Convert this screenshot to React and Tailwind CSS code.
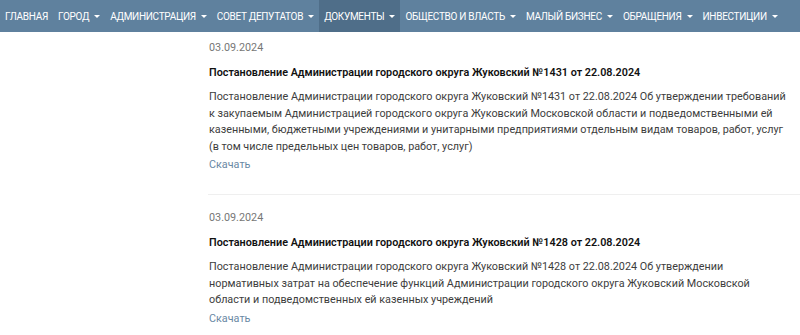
import React from "react";

const navItems = [
  { label: "ГЛАВНАЯ", caret: false },
  { label: "ГОРОД", caret: true },
  { label: "АДМИНИСТРАЦИЯ", caret: true },
  { label: "СОВЕТ ДЕПУТАТОВ", caret: true },
  { label: "ДОКУМЕНТЫ", caret: true, active: true },
  { label: "ОБЩЕСТВО И ВЛАСТЬ", caret: true },
  { label: "МАЛЫЙ БИЗНЕС", caret: true },
  { label: "ОБРАЩЕНИЯ", caret: true },
  { label: "ИНВЕСТИЦИИ", caret: true },
];

const docs = [
  {
    date: "03.09.2024",
    title: "Постановление Администрации городского округа Жуковский №1431 от 22.08.2024",
    text: "Постановление Администрации городского округа Жуковский №1431 от 22.08.2024 Об утверждении требований к закупаемым Администрацией городского округа Жуковский Московской области и подведомственными ей казенными, бюджетными учреждениями и унитарными предприятиями отдельным видам товаров, работ, услуг (в том числе предельных цен товаров, работ, услуг)",
  },
  {
    date: "03.09.2024",
    title: "Постановление Администрации городского округа Жуковский №1428 от 22.08.2024",
    text: "Постановление Администрации городского округа Жуковский №1428 от 22.08.2024 Об утверждении нормативных затрат на обеспечение функций Администрации городского округа Жуковский Московской области и подведомственных ей казенных учреждений",
  },
];

function Caret() {
  return (
    <span className="ml-[5px] inline-block h-0 w-0 border-x-[3px] border-t-[3px] border-x-transparent border-t-white align-middle" />
  );
}

export default function App() {
  return (
    <div
      className="h-[335px] w-[800px] overflow-hidden bg-white"
      style={{ fontFamily: 'Roboto, "Open Sans", sans-serif' }}
    >
      <nav className="flex h-[32px] items-stretch bg-[#5f819e] text-[10px] tracking-[-0.3px] text-white">
        {navItems.map((it) => (
          <div
            key={it.label}
            className={
              "flex items-center whitespace-nowrap px-[5px] " +
              (it.active ? "bg-[#4f6e89]" : "")
            }
          >
            {it.label}
            {it.caret && <Caret />}
          </div>
        ))}
      </nav>
      <main className="pl-[209px]">
        {docs.map((d, i) => (
          <div key={i}>
            {i > 0 && <div className="h-px w-[600px] bg-[#efefef] -ml-px" />}
            <div className={"w-[584px] " + (i === 0 ? "pt-[8px] pb-[21px]" : "pt-[15px]")}>
              <div className="text-[10.8px] leading-[16px] text-[#777]">{d.date}</div>
              <div className="mt-[9px] text-[10.8px] font-semibold leading-[16px] text-[#111]">{d.title}</div>
              <div className="mt-[8px] text-[10.8px] leading-[16.5px] text-[#3d3d3d]">{d.text}</div>
              <div className="mt-[2px] text-[10.8px] leading-[16px] text-[#6a88a4]">Скачать</div>
            </div>
          </div>
        ))}
      </main>
    </div>
  );
}
